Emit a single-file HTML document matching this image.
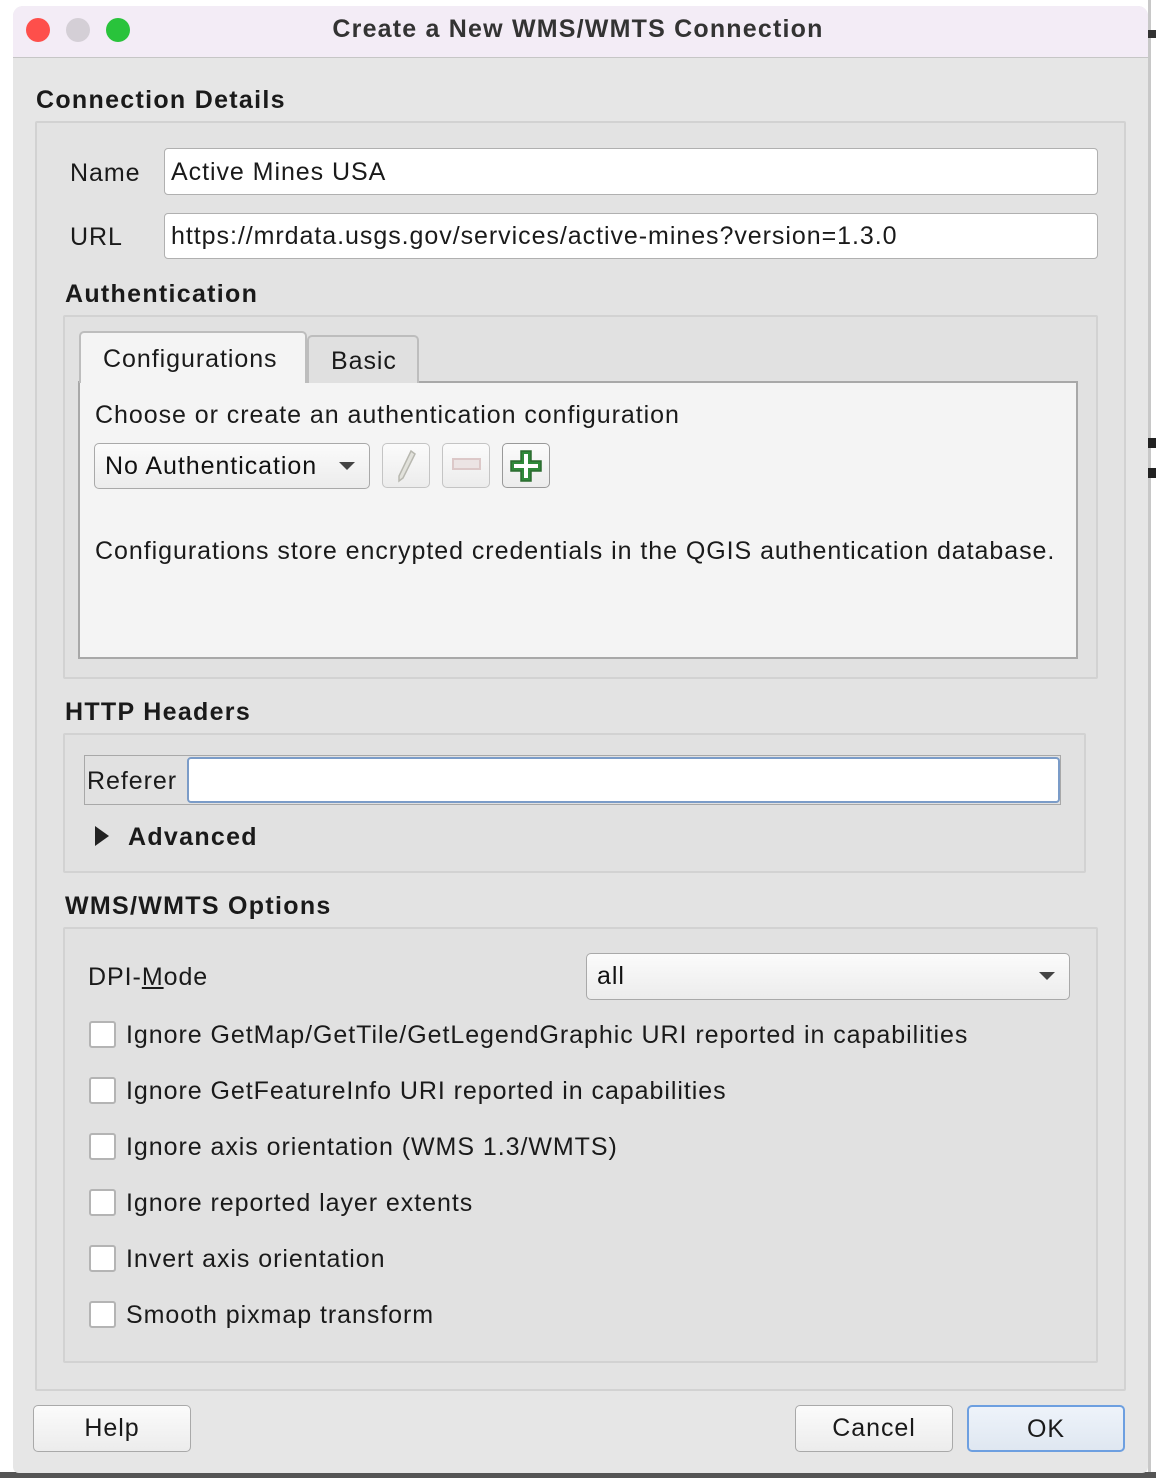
<!DOCTYPE html>
<html><head><meta charset="utf-8"><style>
*{box-sizing:border-box;margin:0;padding:0}
body{width:1156px;height:1478px;background:#fff;position:relative;overflow:hidden;font-family:"Liberation Sans",sans-serif;color:#1a1a1a}
.a{position:absolute}
.t{position:absolute;font-size:25px;line-height:30px;white-space:nowrap;letter-spacing:0.95px}
.b{font-weight:bold;letter-spacing:1.3px}
.grp{position:absolute;border:2px solid #d2d2d2;background:#e1e1e1;border-radius:2px}
.inp{position:absolute;background:#fff;border:1px solid #b0b0b0;border-radius:4px}
.btn{position:absolute;border:1px solid #a9a9a9;border-radius:5px;background:linear-gradient(#fbfbfb,#ececec);font-size:25px;text-align:center;line-height:45px;letter-spacing:0.95px}
.cb{position:absolute;left:89px;width:27px;height:27px;background:#fff;border:2px solid #b4b4b4;border-radius:3px}
</style></head><body>
<div class="a" style="left:1148px;top:0;width:3px;height:1478px;background:#c8c8c8"></div>
<div class="a" style="left:1148px;top:30px;width:8px;height:8px;background:#333"></div>
<div class="a" style="left:1148px;top:438px;width:8px;height:10px;background:#222"></div>
<div class="a" style="left:1148px;top:468px;width:8px;height:10px;background:#222"></div>
<div class="a" style="left:0;top:1472px;width:1156px;height:6px;background:#555"></div>
<div class="a" style="left:13px;top:6px;width:1135px;height:1467px;background:#e6e6e6;border-radius:10px 10px 6px 6px;overflow:hidden">
 <div class="a" style="left:0;top:0;width:1135px;height:52px;background:#f3ecf6;border-bottom:1px solid #c6c6c6"></div>
 <div class="a" style="left:13px;top:12px;width:24px;height:24px;border-radius:50%;background:#fe4f4b"></div>
 <div class="a" style="left:53px;top:12px;width:24px;height:24px;border-radius:50%;background:#d4cfd6"></div>
 <div class="a" style="left:93px;top:12px;width:24px;height:24px;border-radius:50%;background:#29c33b"></div>
</div>
<div class="t b" style="left:0;width:1156px;text-align:center;top:14px;font-size:25px;color:#333;letter-spacing:1.2px">Create a New WMS/WMTS Connection</div>
<div class="t b" style="left:36px;top:85px">Connection Details</div>
<div class="grp" style="left:35px;top:121px;width:1091px;height:1270px;background:#e3e3e3"></div>
<div class="t" style="left:70px;top:158px">Name</div>
<div class="inp" style="left:164px;top:148px;width:934px;height:47px"></div>
<div class="t" style="left:171px;top:157px">Active Mines USA</div>
<div class="t" style="left:70px;top:222px">URL</div>
<div class="inp" style="left:164px;top:213px;width:934px;height:46px"></div>
<div class="t" style="left:171px;top:221px">https://mrdata.usgs.gov/services/active-mines?version=1.3.0</div>
<div class="t b" style="left:65px;top:279px">Authentication</div>
<div class="grp" style="left:63px;top:315px;width:1035px;height:364px"></div>
<div class="a" style="left:78px;top:381px;width:1000px;height:278px;background:#f4f4f4;border:2px solid #a8a8a8"></div>
<div class="a" style="left:307px;top:335px;width:112px;height:48px;background:#e0e0e0;border:2px solid #bdbdbd;border-bottom:none;border-radius:5px 5px 0 0"></div>
<div class="a" style="left:79px;top:331px;width:228px;height:52px;background:#f4f4f4;border:2px solid #bdbdbd;border-bottom:none;border-radius:5px 5px 0 0"></div>
<div class="t" style="left:103px;top:344px">Configurations</div>
<div class="t" style="left:331px;top:346px">Basic</div>
<div class="t" style="left:95px;top:400px">Choose or create an authentication configuration</div>
<div class="btn" style="left:94px;top:443px;width:276px;height:46px;text-align:left;padding-left:10px;color:#111">No Authentication</div>
<div class="a" style="left:339px;top:462px;width:0;height:0;border-left:8px solid transparent;border-right:8px solid transparent;border-top:8px solid #444"></div>
<div class="btn" style="left:382px;top:443px;width:48px;height:45px;border-color:#c4c4c4"></div>
<svg class="a" style="left:382px;top:443px" width="48" height="45"><path d="M29 8 L33 11 L21 35 L17 38 L17 33 Z" fill="#e2e2dc" stroke="#b8b8b0" stroke-width="1.5"/></svg>
<div class="btn" style="left:442px;top:443px;width:48px;height:45px;border-color:#c4c4c4"></div>
<div class="a" style="left:452px;top:458px;width:29px;height:12px;border:2px solid #dcc8c8;background:#ece4e4"></div>
<div class="btn" style="left:502px;top:443px;width:48px;height:45px;border-color:#999"></div>
<svg class="a" style="left:502px;top:443px" width="48" height="45"><path d="M19 8 H29 V18 H39 V28 H29 V38 H19 V28 H9 V18 H19 Z" fill="#2f8a3a" stroke="#2b6b2f" stroke-width="1.5"/><path d="M22 11 H26 V21 H36 V25 H26 V35 H22 V25 H12 V21 H22 Z" fill="#fff"/></svg>
<div class="t" style="left:95px;top:536px">Configurations store encrypted credentials in the QGIS authentication database.</div>
<div class="t b" style="left:65px;top:697px">HTTP Headers</div>
<div class="grp" style="left:63px;top:733px;width:1023px;height:140px"></div>
<div class="a" style="left:84px;top:755px;width:977px;height:50px;border:1px solid #a8a8a8"></div>
<div class="t" style="left:87px;top:766px">Referer</div>
<div class="inp" style="left:187px;top:757px;width:873px;height:46px;border:2px solid #7b9cc8;border-radius:4px"></div>
<div class="a" style="left:95px;top:826px;width:0;height:0;border-top:10px solid transparent;border-bottom:10px solid transparent;border-left:14px solid #222"></div>
<div class="t b" style="left:128px;top:822px">Advanced</div>
<div class="t b" style="left:65px;top:891px">WMS/WMTS Options</div>
<div class="grp" style="left:63px;top:927px;width:1035px;height:436px"></div>
<div class="t" style="left:88px;top:962px">DPI-<span style="text-decoration:underline">M</span>ode</div>
<div class="btn" style="left:586px;top:953px;width:484px;height:47px;text-align:left;padding-left:10px;color:#111">all</div>
<div class="a" style="left:1039px;top:972px;width:0;height:0;border-left:8px solid transparent;border-right:8px solid transparent;border-top:8px solid #444"></div>
<div class="cb" style="top:1021px"></div><div class="t" style="left:126px;top:1020px">Ignore GetMap/GetTile/GetLegendGraphic URI reported in capabilities</div>
<div class="cb" style="top:1077px"></div><div class="t" style="left:126px;top:1076px">Ignore GetFeatureInfo URI reported in capabilities</div>
<div class="cb" style="top:1133px"></div><div class="t" style="left:126px;top:1132px">Ignore axis orientation (WMS 1.3/WMTS)</div>
<div class="cb" style="top:1189px"></div><div class="t" style="left:126px;top:1188px">Ignore reported layer extents</div>
<div class="cb" style="top:1245px"></div><div class="t" style="left:126px;top:1244px">Invert axis orientation</div>
<div class="cb" style="top:1301px"></div><div class="t" style="left:126px;top:1300px">Smooth pixmap transform</div>
<div class="btn" style="left:33px;top:1405px;width:158px;height:47px">Help</div>
<div class="btn" style="left:795px;top:1405px;width:158px;height:47px">Cancel</div>
<div class="btn" style="left:967px;top:1405px;width:158px;height:47px;border:2px solid #6d9fe0;background:linear-gradient(#eef3fa,#dfe7f1)">OK</div>
</body></html>
